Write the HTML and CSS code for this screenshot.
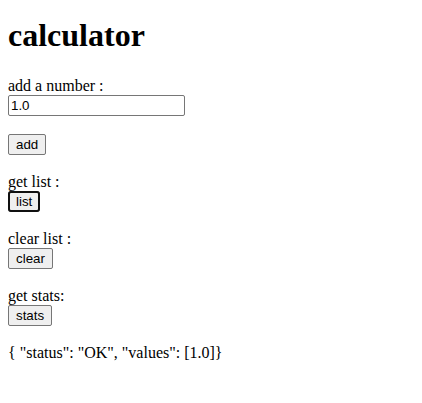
FILE: index.html
```html
<!DOCTYPE html>
<html>
<head>
<meta charset="utf-8">
<title>calculator</title>
<link rel="stylesheet" href="styles.css">
</head>
<body>
<main class="page">
  <h1 class="title">calculator</h1>
  <label class="label label-first" for="num">add a number :</label>
  <input class="num" id="num" type="text" value="1.0">
  <button class="btn btn-add">add</button>
  <span class="label">get list :</span>
  <button class="btn focused">list</button>
  <span class="label">clear list :</span>
  <button class="btn">clear</button>
  <span class="label">get stats:</span>
  <button class="btn">stats</button>
  <div class="result">{ "status": "OK", "values": [1.0]}</div>
</main>
</body>
</html>
```
FILE: styles.css
```css
html, body {
  margin: 0;
  background: #fff;
}
body {
  font-family: "Liberation Serif", "Times New Roman", serif;
  font-size: 16px;
  line-height: 18px;
  color: #000;
}
.page {
  display: flex;
  flex-direction: column;
  align-items: flex-start;
  padding: 17px 8px 0;
}
.title {
  font-size: 32px;
  line-height: 36px;
  font-weight: bold;
  margin: 0;
}
.label {
  display: block;
  margin-top: 18px;
  line-height: 18px;
}
.label-first {
  margin-top: 24px;
}
.num {
  box-sizing: border-box;
  font-family: "Liberation Sans", Arial, sans-serif;
  font-size: 13.33px;
  width: 177px;
  height: 21px;
  margin: 0;
  padding: 1px 2px;
  border: 1px solid #767676;
  border-radius: 2px;
  color: #000;
  background: #fff;
}
.btn {
  box-sizing: border-box;
  height: 21px;
  margin: 0;
  font-family: "Liberation Sans", Arial, sans-serif;
  font-size: 13.33px;
  line-height: 15px;
  padding: 2px 7px;
  background: #efefef;
  border: 1px solid #767676;
  border-radius: 2px;
  color: #000;
}
.btn-add {
  margin-top: 18px;
}
.btn.focused {
  outline: 2px solid #101010;
  outline-offset: -2px;
  border-radius: 3px;
}
.result {
  margin-top: 18px;
}
```
